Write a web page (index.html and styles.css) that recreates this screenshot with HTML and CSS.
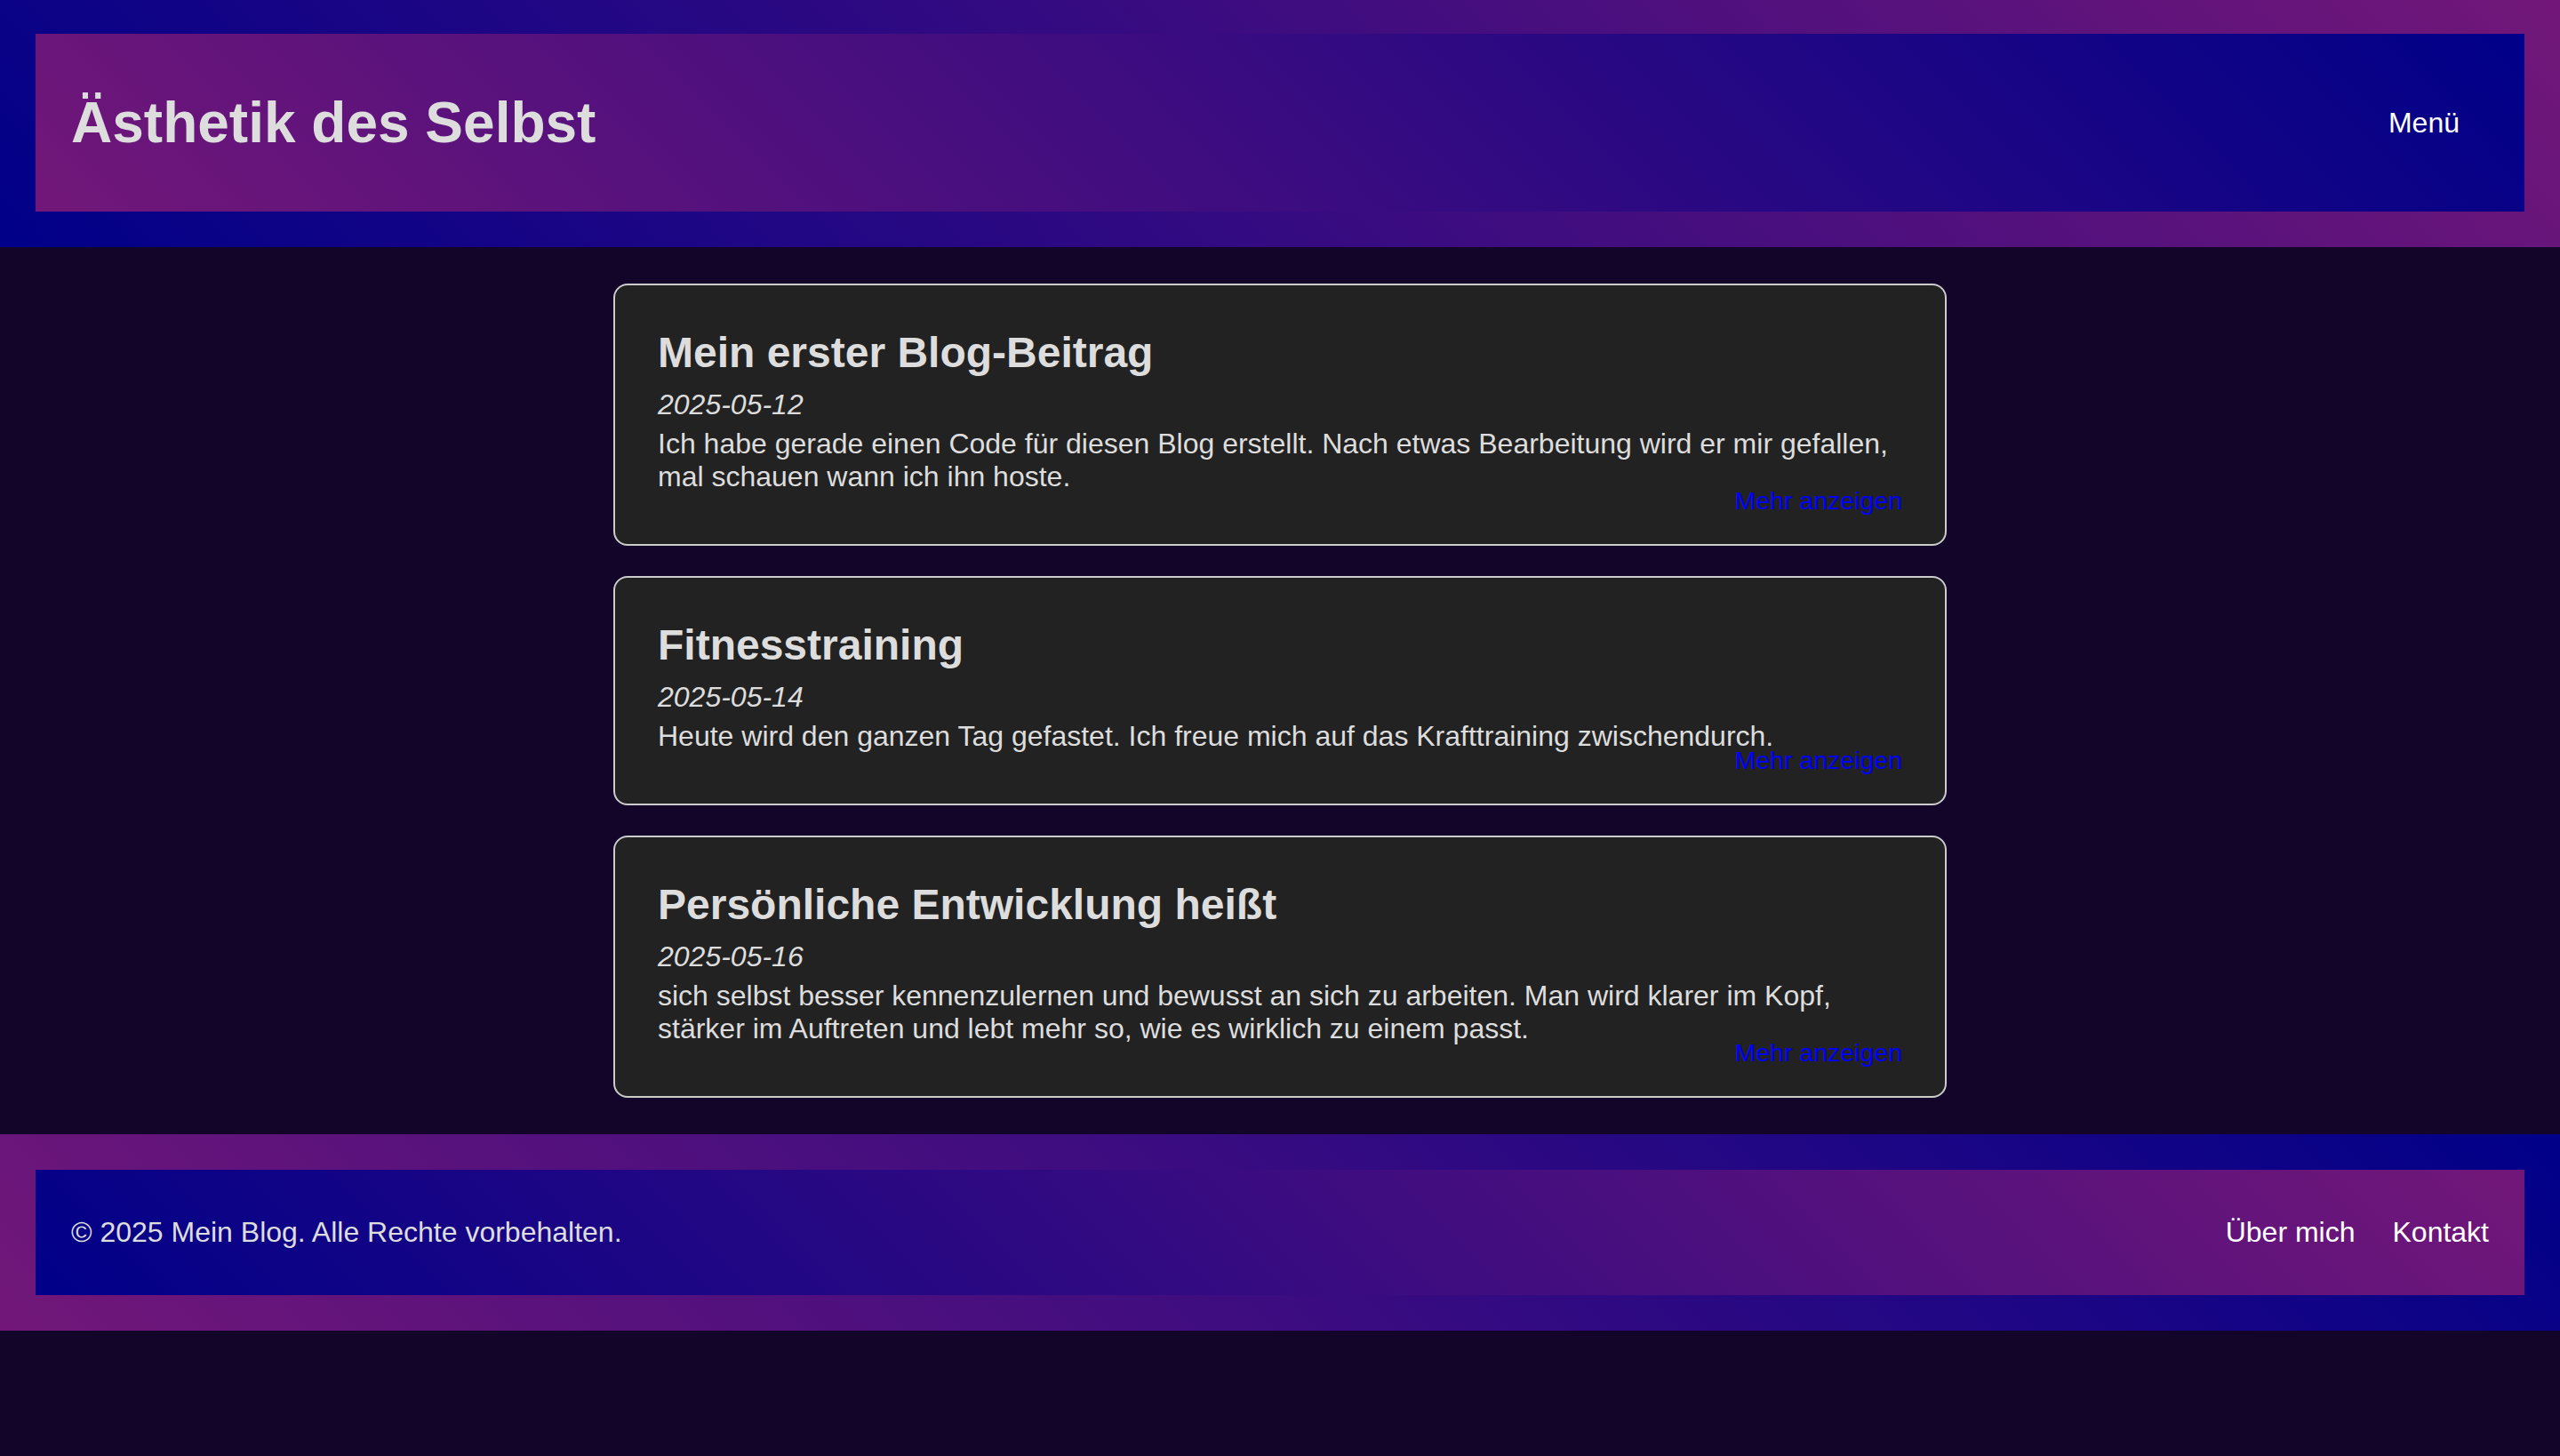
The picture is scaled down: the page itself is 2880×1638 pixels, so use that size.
FILE: index.html
```html
<!DOCTYPE html>
<html lang="de">
<head>
<meta charset="utf-8">
<title>Ästhetik des Selbst</title>
<link rel="stylesheet" href="styles.css">
</head>
<body>
<header class="site-header">
  <div class="header-inner">
    <h1 class="site-title">Ästhetik des Selbst</h1>
    <nav class="menu"><a href="#" class="menu-link">Menü</a></nav>
  </div>
</header>
<main class="posts">
  <article class="post">
    <h2 class="post-title">Mein erster Blog-Beitrag</h2>
    <p class="post-date">2025-05-12</p>
    <p class="post-text">Ich habe gerade einen Code für diesen Blog erstellt. Nach etwas Bearbeitung wird er mir gefallen, mal schauen wann ich ihn hoste.</p>
    <a href="#" class="more">Mehr anzeigen</a>
  </article>
  <article class="post">
    <h2 class="post-title">Fitnesstraining</h2>
    <p class="post-date">2025-05-14</p>
    <p class="post-text">Heute wird den ganzen Tag gefastet. Ich freue mich auf das Krafttraining zwischendurch.</p>
    <a href="#" class="more">Mehr anzeigen</a>
  </article>
  <article class="post">
    <h2 class="post-title">Persönliche Entwicklung heißt</h2>
    <p class="post-date">2025-05-16</p>
    <p class="post-text">sich selbst besser kennenzulernen und bewusst an sich zu arbeiten. Man wird klarer im Kopf, stärker im Auftreten und lebt mehr so, wie es wirklich zu einem passt.</p>
    <a href="#" class="more">Mehr anzeigen</a>
  </article>
</main>
<footer class="site-footer">
  <div class="footer-inner">
    <p class="copyright">© 2025 Mein Blog. Alle Rechte vorbehalten.</p>
    <nav class="footer-nav">
      <a href="#" class="footer-link">Über mich</a>
      <a href="#" class="footer-link">Kontakt</a>
    </nav>
  </div>
</footer>
</body>
</html>
```

FILE: styles.css
```css
html, body {
  margin: 0;
  padding: 0;
}
body {
  background: #13042a;
  color: #dddddd;
  font-family: "Liberation Sans", Arial, sans-serif;
  font-size: 32px;
  min-height: 1638px;
}
a {
  text-decoration: none;
}

.site-header {
  padding: 38px 40px 40px;
  background: linear-gradient(45deg, #000088, #721779);
}
.header-inner {
  display: flex;
  align-items: center;
  justify-content: space-between;
  padding: 20px 40px;
  background: linear-gradient(45deg, #721779, #000088);
}
.site-title {
  margin: 43px 0;
  font-size: 64px;
  font-weight: bold;
  color: #dddddd;
}
.menu {
  margin-right: 33px;
}
.menu-link {
  color: #ffffff;
  font-size: 32px;
}

.posts {
  display: flex;
  flex-direction: column;
  align-items: center;
  gap: 34px;
  padding: 41px 0;
}
.post {
  position: relative;
  box-sizing: border-box;
  width: 1500px;
  padding: 48px;
  background: #222222;
  border: 2px solid #cccccc;
  border-radius: 16px;
}
.post-title {
  margin: 0 0 13px;
  font-size: 48px;
  font-weight: bold;
  color: #dddddd;
}
.post-date {
  margin: 0 0 7px;
  font-style: italic;
  font-size: 32px;
}
.post-text {
  margin: 0 0 9px;
  font-size: 32px;
}
.more {
  position: absolute;
  right: 48px;
  bottom: 32px;
  font-size: 28.5px;
  color: #0000ff;
}

.site-footer {
  padding: 40px;
  background: linear-gradient(45deg, #721779, #000088);
}
.footer-inner {
  display: flex;
  align-items: center;
  justify-content: space-between;
  padding: 20px 40px;
  background: linear-gradient(45deg, #000088, #721779);
}
.copyright {
  margin: 32px 0;
  color: #dddddd;
}
.footer-nav {
  display: flex;
  gap: 42px;
}
.footer-link {
  color: #ffffff;
}
```
